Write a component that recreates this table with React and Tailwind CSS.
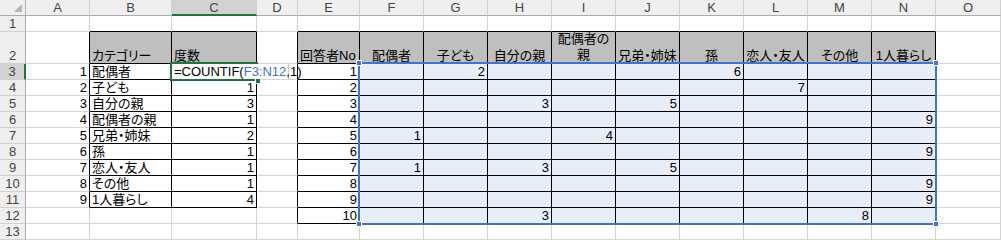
import React from 'react';
import clsx from 'clsx';

const COLS = ['A', 'B', 'C', 'D', 'E', 'F', 'G', 'H', 'I', 'J', 'K', 'L', 'M', 'N', 'O'];
const ROWS = [1, 2, 3, 4, 5, 6, 7, 8, 9, 10, 11, 12, 13];

const categories = ['配偶者', '子ども', '自分の親', '配偶者の親', '兄弟・姉妹', '孫', '恋人・友人', 'その他', '1人暮らし'];
const counts = [null, 1, 3, 1, 2, 1, 1, 1, 4];

const headers = {
  B: 'カテゴリー',
  C: '度数',
  E: '回答者No',
  F: '配偶者',
  G: '子ども',
  H: '自分の親',
  J: '兄弟・姉妹',
  K: '孫',
  L: '恋人・友人',
  M: 'その他',
  N: '1人暮らし',
};

// 回答データ（行 → 列 → 値）
const answers = {
  3: { G: 2, K: 6 },
  4: { L: 7 },
  5: { H: 3, J: 5 },
  6: { N: 9 },
  7: { F: 1, I: 4 },
  8: { N: 9 },
  9: { F: 1, H: 3, J: 5 },
  10: { N: 9 },
  11: { N: 9 },
  12: { H: 3, M: 8 },
};

// 罫線付きの表の範囲
const inTable = (c, r) =>
  (c >= 1 && c <= 2 && r >= 2 && r <= 11) || (c >= 4 && c <= 13 && r >= 2 && r <= 12);

const inRange = (c, r) => c >= 5 && c <= 13 && r >= 3 && r <= 12;

const getContent = (c, r) => {
  const col = COLS[c];
  if (r === 2) {
    if (col === 'I') {
      return { text: <>配偶者の<br />親</>, align: 'center', wrap: true };
    }
    if (headers[col]) {
      return { text: headers[col], align: ['B', 'C', 'E'].includes(col) ? 'left' : 'center' };
    }
    return null;
  }
  if (r >= 3 && r <= 11) {
    const i = r - 3;
    if (col === 'A') return { text: String(i + 1), align: 'right' };
    if (col === 'B') return { text: categories[i], align: 'left' };
    if (col === 'C' && counts[i] !== null) return { text: String(counts[i]), align: 'right' };
  }
  if (r >= 3 && r <= 12) {
    if (col === 'E') return { text: String(r - 2), align: 'right' };
    const v = answers[r] && answers[r][col];
    if (v !== undefined) return { text: String(v), align: 'right' };
  }
  return null;
};

const Cell = ({ c, r }) => {
  const content = getContent(c, r);
  const t = inTable(c, r);
  const rightBlack = t || inTable(c + 1, r);
  const bottomBlack = t || inTable(c, r + 1);
  const isHead = r === 2 && t;

  return (
    <div
      className={clsx(
        'flex items-end overflow-hidden whitespace-nowrap border-r border-b px-[2px] text-black',
        rightBlack ? 'border-r-black' : 'border-r-[#d4d4d4]',
        bottomBlack ? 'border-b-black' : 'border-b-[#d4d4d4]',
        isHead ? 'bg-[#bfbfbf]' : inRange(c, r) ? 'bg-[#e8eef8]' : 'bg-white',
        content && content.align === 'right' && 'justify-end',
        content && content.align === 'center' && 'justify-center',
        content && content.align === 'left' && 'justify-start'
      )}
    >
      {content && (
        <span className={clsx('leading-[15px]', content.wrap && 'whitespace-normal text-center leading-[16px]')}>
          {content.text}
        </span>
      )}
    </div>
  );
};

const Handle = ({ className, color }) => (
  <div className={clsx('absolute h-[6px] w-[6px] border border-white', color, className)} />
);

export default function App() {
  return (
    <div className="h-[240px] w-[1001px] overflow-hidden bg-white font-['Liberation_Sans','Noto_Sans_CJK_JP',sans-serif] text-[13px] [font-feature-settings:'palt']">
      <div className="relative grid grid-cols-[26px_64px_82px_85px_41px_62px_repeat(9,64px)_1fr] grid-rows-[16px_16px_32px_repeat(11,16px)]">
        {/* 左上の全選択ボタン */}
        <div className="flex items-end justify-end border-r border-b border-r-[#ababab] border-b-[#ababab] bg-[#efefef] pr-[3px] pb-[3px]">
          <svg width="8" height="8" viewBox="0 0 8 8">
            <polygon points="8,0 8,8 0,8" fill="#b4b4b4" />
          </svg>
        </div>

        {/* 列見出し */}
        {COLS.map((col) => (
          <div
            key={col}
            className={clsx(
              'flex items-center justify-center border-r border-r-[#d0d0d0] leading-none text-[#444]',
              col === 'C' ? 'border-b-2 border-b-[#217346] bg-[#d2d2d2]' : 'border-b border-b-[#ababab] bg-[#efefef]'
            )}
          >
            {col}
          </div>
        ))}

        {ROWS.map((r) => (
          <React.Fragment key={r}>
            <div
              className={clsx(
                'flex items-end justify-center border-b border-b-[#d0d0d0] leading-[15px] text-[#444]',
                r === 3 ? 'border-r-2 border-r-[#217346] bg-[#d2d2d2]' : 'border-r border-r-[#ababab] bg-[#efefef]'
              )}
            >
              {r}
            </div>
            {COLS.map((col, c) => (
              <Cell key={col} c={c} r={r} />
            ))}
          </React.Fragment>
        ))}

        {/* 参照範囲 F3:N12 */}
        <div className="pointer-events-none absolute col-start-7 col-end-16 row-start-4 row-end-14 -top-[2px] -left-[2px] -right-px -bottom-px z-10 border-2 border-[#4472c4]">
          <Handle color="bg-[#4472c4]" className="-top-[4px] -left-[4px]" />
          <Handle color="bg-[#4472c4]" className="-top-[4px] -right-[4px]" />
          <Handle color="bg-[#4472c4]" className="-bottom-[4px] -left-[4px]" />
          <Handle color="bg-[#4472c4]" className="-bottom-[4px] -right-[4px]" />
        </div>

        {/* アクティブセル C3 の枠 */}
        <div className="pointer-events-none absolute col-start-4 col-end-5 row-start-4 row-end-5 -top-[2px] -left-[2px] -right-px -bottom-px z-20 border-2 border-[#217346]" />

        {/* 数式の編集ボックス */}
        <div className="absolute col-start-4 col-end-5 row-start-4 row-end-5 top-0 left-0 z-30 flex h-[15px] w-[117px] items-end whitespace-nowrap border-r border-r-[#c8c8c8] bg-white pl-[2px] leading-[15px] text-black">
          =COUNTIF(<span className="text-[#4472c4]">F3:N12</span>,1)
        </div>

        <div className="pointer-events-none absolute col-start-4 col-end-5 row-start-4 row-end-5 -right-px -bottom-px z-40">
          <Handle color="bg-[#217346]" className="-bottom-[3px] -right-[3px]" />
        </div>
      </div>
    </div>
  );
}
